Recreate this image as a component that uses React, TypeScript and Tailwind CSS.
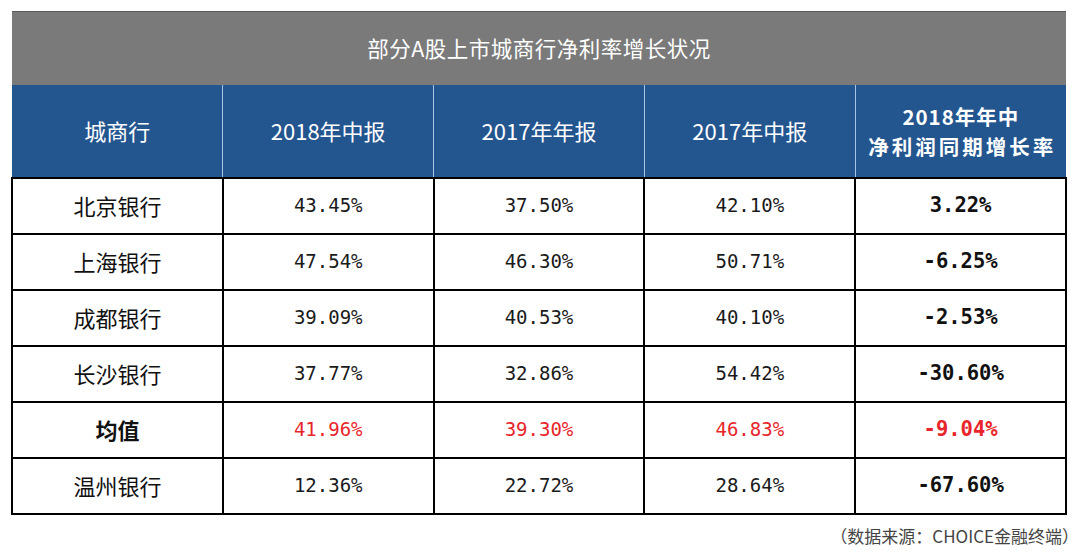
import React from 'react'

const rows = [
  { name: '北京银行', a: '43.45%', b: '37.50%', c: '42.10%', d: '3.22%' },
  { name: '上海银行', a: '47.54%', b: '46.30%', c: '50.71%', d: '-6.25%' },
  { name: '成都银行', a: '39.09%', b: '40.53%', c: '40.10%', d: '-2.53%' },
  { name: '长沙银行', a: '37.77%', b: '32.86%', c: '54.42%', d: '-30.60%' },
  { name: '均值', a: '41.96%', b: '39.30%', c: '46.83%', d: '-9.04%', avg: true },
  { name: '温州银行', a: '12.36%', b: '22.72%', c: '28.64%', d: '-67.60%' },
]

const cjk = "font-['Noto_Sans_CJK_SC',sans-serif]"
const num = "font-['DejaVu_Sans_Mono','Noto_Sans_CJK_SC',monospace]"

const App = () => {
  return (
    <div className="w-[1080px] h-[554px] bg-white pt-[11px] pl-[11px]">
      <table className={`w-[1056px] table-fixed border-collapse ${cjk}`}>
        <thead>
          <tr>
            <th
              colSpan={5}
              className="h-[73px] bg-[#7a7a7a] border-t border-[#5a5a5a] text-white text-[21.5px] font-normal tracking-[0.5px]"
            >
              部分A股上市城商行净利率增长状况
            </th>
          </tr>
          <tr className="h-[93px] bg-[#23558f] text-white text-[22px]">
            <th className="font-normal border-r border-[#a9c4e4]">城商行</th>
            <th className="font-normal border-x border-[#a9c4e4]">2018年中报</th>
            <th className="font-normal border-x border-[#a9c4e4]">2017年年报</th>
            <th className="font-normal border-x border-[#a9c4e4]">2017年中报</th>
            <th className="font-bold leading-[30px] text-[20.5px] border-l border-[#a9c4e4]">
              <span className="tracking-[1px]">2018年年中</span>
              <br />
              <span className="tracking-[3px] pl-[3px]">净利润同期增长率</span>
            </th>
          </tr>
        </thead>
        <tbody>
          {rows.map(r => (
            <tr key={r.name} className="h-[56px]">
              <td
                className={`border-2 border-black text-center text-[22px] text-[#111] ${
                  r.avg ? 'font-bold' : ''
                }`}
              >
                {r.name}
              </td>
              {[r.a, r.b, r.c].map((v, i) => (
                <td
                  key={i}
                  className={`border-2 border-black text-center text-[19px] ${num} ${
                    r.avg ? 'text-[#e8252b]' : 'text-[#1a1a1a]'
                  }`}
                >
                  {v}
                </td>
              ))}
              <td
                className={`border-2 border-black text-center text-[20.5px] font-bold ${num} ${
                  r.avg ? 'text-[#e8252b]' : 'text-[#111]'
                }`}
              >
                {r.d}
              </td>
            </tr>
          ))}
        </tbody>
      </table>
      <div className={`w-[1068px] mt-[8px] text-right text-[17px] text-[#444] ${cjk}`}>
        （数据来源：CHOICE金融终端）
      </div>
    </div>
  )
}

export default App
